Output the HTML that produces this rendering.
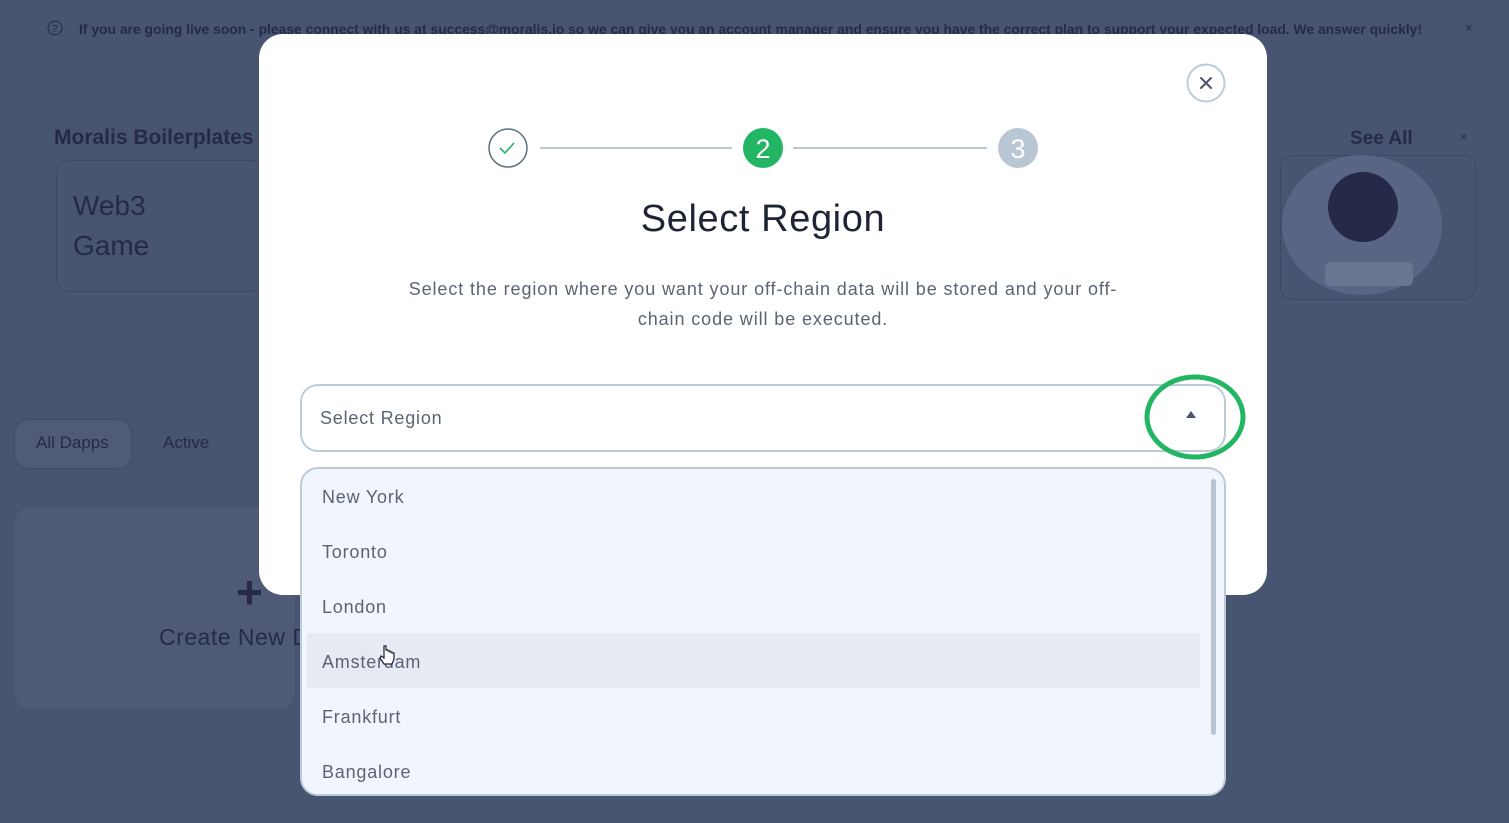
<!DOCTYPE html>
<html><head><meta charset="utf-8"><style>
*{margin:0;padding:0;box-sizing:border-box}
body{width:1509px;height:823px;background:#485570;font-family:"Liberation Sans",sans-serif;position:relative;overflow:hidden}
.abs{position:absolute}
.dark{color:#262a48}
.modal{left:259px;top:34px;width:1008px;height:561px;background:#fff;border-radius:24px}
.item{position:absolute;left:20px;font-size:18px;color:#5b6475;letter-spacing:0.8px}
</style></head><body>
<svg class="abs" style="left:0;top:0" width="1509" height="60">
<circle cx="55" cy="28" r="7" fill="none" stroke="#262a48" stroke-width="1"/>
<text x="52" y="32" font-size="10" fill="#262a48" font-family="Liberation Sans">?</text>
<text x="79" y="34" font-size="14" font-weight="bold" fill="#262a48" textLength="1343" lengthAdjust="spacingAndGlyphs" font-family="Liberation Sans">If you are going live soon - please connect with us at success@moralis.io so we can give you an account manager and ensure you have the correct plan to support your expected load. We answer quickly!</text>
<text x="1465" y="32" font-size="13" fill="#262a48">×</text>
</svg>
<div class="abs dark" style="left:54px;top:126px;font-size:21px;font-weight:bold">Moralis Boilerplates</div>
<div class="abs" style="left:56px;top:160px;width:210px;height:132px;border:1px dotted #333a55;border-radius:14px"></div>
<div class="abs dark" style="left:73px;top:186px;font-size:28px;line-height:40px">Web3<br>Game</div>
<div class="abs dark" style="left:1350px;top:128px;font-size:19px;font-weight:bold">See All</div>
<div class="abs dark" style="left:1460px;top:130px;font-size:12px">×</div>
<div class="abs" style="left:1280px;top:155px;width:196px;height:145px;border:1px dotted #333a55;border-radius:12px"></div>
<div class="abs" style="left:1282px;top:155px;width:160px;height:140px;border-radius:50%;background:#5a6585"></div>
<div class="abs" style="left:1328px;top:172px;width:70px;height:70px;border-radius:50%;background:#262a48"></div>
<div class="abs" style="left:1325px;top:262px;width:88px;height:24px;border-radius:6px;background:#6a7590"></div>
<div class="abs" style="left:14px;top:419px;width:118px;height:50px;border:1px dotted #333a55;border-radius:14px;background:#505c77"></div>
<div class="abs dark" style="left:36px;top:433px;font-size:17px">All Dapps</div>
<div class="abs dark" style="left:163px;top:433px;font-size:17px">Active</div>
<div class="abs" style="left:15px;top:507px;width:280px;height:202px;border-radius:16px;background:#4f5b76"></div>
<div class="abs dark" style="left:236px;top:565px;font-size:46px;font-weight:bold">+</div>
<div class="abs dark" style="left:159px;top:624px;font-size:23px;letter-spacing:0.5px">Create New Dapp</div>

<div class="abs modal"></div>
<svg class="abs" style="left:0;top:0" width="1509" height="600">
<circle cx="1206" cy="83" r="18.5" fill="#fff" stroke="#b9cddb" stroke-width="2"/>
<path d="M1201 78 L1211 88 M1211 78 L1201 88" stroke="#4a5568" stroke-width="2" stroke-linecap="round"/>
<circle cx="508" cy="148" r="19" fill="#fff" stroke="#5e6f80" stroke-width="1.5"/>
<path d="M500 148 l5 5 l9 -10" fill="none" stroke="#21b564" stroke-width="1.6"/>
<line x1="540" y1="148" x2="732" y2="148" stroke="#b9c6d3" stroke-width="2"/>
<circle cx="763" cy="148" r="20" fill="#21b564"/>
<text x="763" y="158" text-anchor="middle" font-size="27" fill="#fff" font-family="Liberation Sans">2</text>
<line x1="793" y1="148" x2="987" y2="148" stroke="#b9c6d3" stroke-width="2"/>
<circle cx="1018" cy="148" r="20" fill="#b8c7d3"/>
<text x="1018" y="158" text-anchor="middle" font-size="27" fill="#fff" font-family="Liberation Sans">3</text>
</svg>
<div class="abs" style="left:259px;width:1008px;top:198px;text-align:center;font-size:38px;color:#1e2435;letter-spacing:0.6px">Select Region</div>
<div class="abs" style="left:259px;width:1008px;top:274px;text-align:center;font-size:18px;line-height:30px;color:#5b6475;letter-spacing:0.9px">Select the region where you want your off-chain data will be stored and your off-<br>chain code will be executed.</div>
<div class="abs" style="left:300px;top:384px;width:926px;height:68px;border:2px solid #bccbd8;border-radius:18px;background:#fff"></div>
<div class="abs" style="left:320px;top:408px;font-size:18px;color:#5b6475;letter-spacing:0.8px">Select Region</div>
<svg class="abs" style="left:0;top:0" width="1509" height="823">
<path d="M1186 418 L1196 418 L1191 411 Z" fill="#4a5568"/>
</svg>
<div class="abs" style="left:300px;top:467px;width:926px;height:329px;border:2px solid #bccbd8;border-radius:18px;background:#f1f5fd;overflow:hidden">
<div class="abs" style="left:5px;top:164px;width:893px;height:55px;background:#e6eaf2"></div>
<div class="abs" style="left:909px;top:10px;width:5px;height:256px;border-radius:3px;background:#b7c6d2"></div>
<div class="item" style="top:18px">New York</div>
<div class="item" style="top:73px">Toronto</div>
<div class="item" style="top:128px">London</div>
<div class="item" style="top:183px">Amsterdam</div>
<div class="item" style="top:238px">Frankfurt</div>
<div class="item" style="top:293px">Bangalore</div>
</div>
<svg class="abs" style="left:0;top:0" width="1509" height="823">
<ellipse cx="1195" cy="417" rx="48" ry="40" fill="none" stroke="#21b564" stroke-width="5"/>
<path d="M384 646 v12 l-3 -2 l-1 2 l4 6 h8 l2 -5 v-6 h-2 v-1 h-2 v-1 h-2 v-1 h-2 v-4 z" fill="#fff" stroke="#1e2435" stroke-width="1.2"/>
</svg>
</body></html>
